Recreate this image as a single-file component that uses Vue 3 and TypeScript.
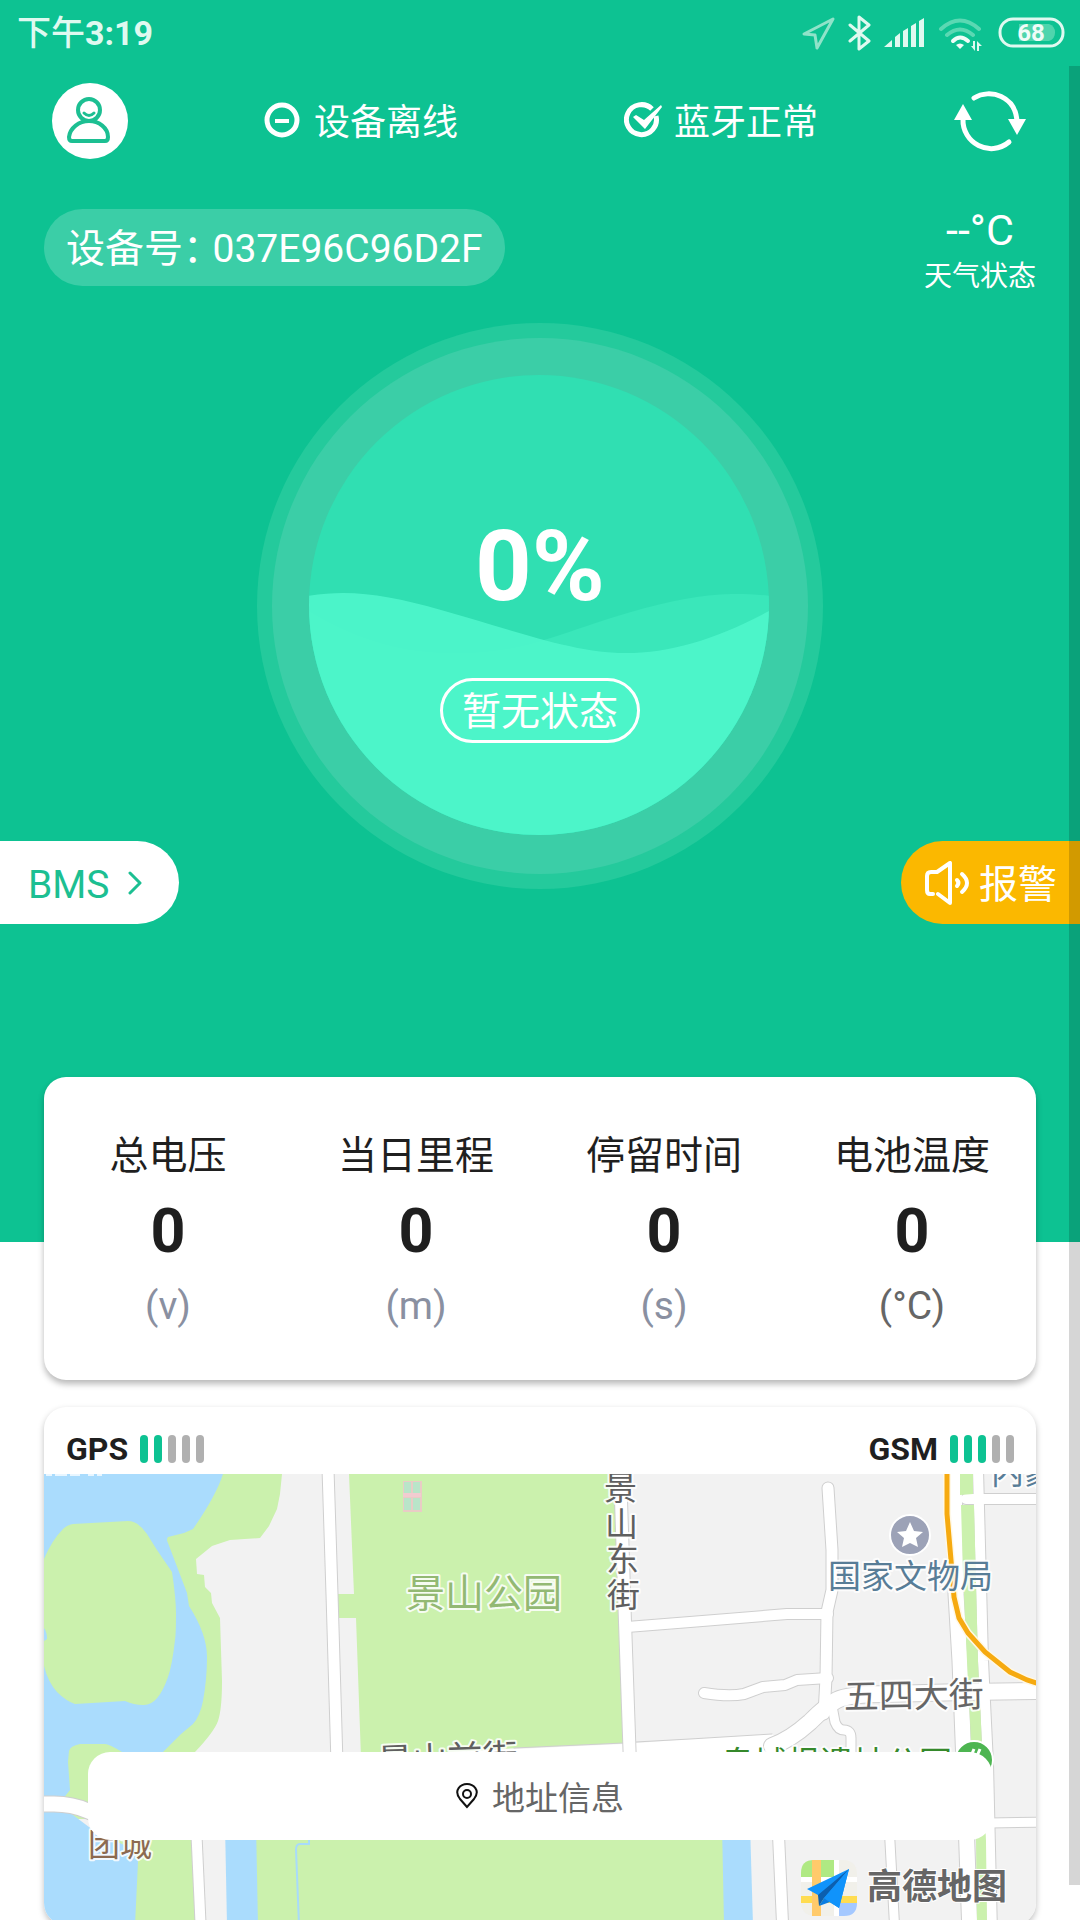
<script setup lang="ts">
interface Stat {
  label: string
  value: number
  unit: string
  dark?: boolean
}

const stats: Stat[] = [
  { label: '总电压', value: 0, unit: '(v)' },
  { label: '当日里程', value: 0, unit: '(m)' },
  { label: '停留时间', value: 0, unit: '(s)' },
  { label: '电池温度', value: 0, unit: '(°C)', dark: true },
]

const signals = [
  { name: 'GPS', level: 2 },
  { name: 'GSM', level: 3 },
]

const deviceId = '037E96C96D2F'
const charge = 0

// Centre lines of the streets, with their drawn width
const roads = [
  { d: 'M284 -5L288 120L293 290', w: 11 },
  { d: 'M576 -5L581 148L586 290', w: 12 },
  { d: 'M583 153L646 148L743 140L784 140', w: 10 },
  { d: 'M784 14L788 76L788 116L783 138L782 204L780 240', w: 11 },
  { d: 'M660 219Q685 223 700 220L719 213L741 211L753 206L784 204', w: 10 },
  { d: 'M788 232L791 248Q794 256 800 256Q807 256 807 264L807 290', w: 9 },
  { d: 'M1000 217L920 218L843 220Q805 220 793 226Q783 231 766 248Q746 266 728 272', w: 16 },
  { d: 'M-5 330L10 330Q28 330 44 337L90 356', w: 15 },
  { d: 'M910 -5L912 120L916 187L920 290L926 460', w: 15 },
  { d: 'M934 -5L939 187L944 290L948 460', w: 10 },
  { d: 'M922 25L1000 25', w: 10 },
  { d: 'M945 349L1000 348', w: 9 },
  { d: 'M734 350L739 460', w: 11 },
  { d: 'M845 350L851 460', w: 9 },
  { d: 'M152 350L157 460', w: 10 },
]
</script>

<template>
  <div class="screen">
    <div class="status-bar">
      <span class="clock">下午<b>3:19</b></span>
      <svg class="sys-icons" viewBox="0 0 264 36" fill="none" aria-hidden="true">
        <path d="M2 19L31 4L15 33L13 20Z" stroke="#8fe3c9" stroke-width="3" stroke-linejoin="round" />
        <path d="M48 10L67 26L57 34V2L67 10L48 26" stroke="#dff9f0" stroke-width="3" stroke-linejoin="round" stroke-linecap="round" />
        <path d="M82 32L90 25V32ZM93 32V22L98 18V32ZM101 32V16L106 13V32ZM109 32V11L114 8V32ZM117 32V6L122 3V32Z" fill="#dff9f0" />
        <path d="M139 14Q158 -3 177 14M145 20Q158 9 171 20" stroke="#5bd8b3" stroke-width="4" stroke-linecap="round" />
        <path d="M151 26Q158 19 166 26" stroke="#effcf8" stroke-width="4" stroke-linecap="round" />
        <path d="M154 30Q158 27 162 30L158 34Z" fill="#effcf8" />
        <path d="M171 26H173V36L169 31H171ZM175 36V26L180 31H177V36Z" fill="#dff9f0" />
        <rect x="198" y="4" width="63" height="27" rx="13" stroke="#dff9f0" stroke-width="3" />
        <path d="M217 9H247A9 9 0 0 1 247 26H217Z" fill="#4fd5ad" />
        <text class="battery" x="229" y="26" text-anchor="middle">68</text>
      </svg>
    </div>

    <main class="content">
      <section class="hero">
        <header class="top">
          <button class="plain" type="button" aria-label="个人中心">
            <svg width="76" height="76" viewBox="0 0 76 76" fill="none">
              <circle cx="38" cy="38" r="38" fill="#fff" />
              <g stroke="#1cbf92" stroke-width="4" stroke-linejoin="round">
                <circle cx="37" cy="27" r="11" />
                <path d="M32 30Q37 35 42 30" stroke-width="3" stroke-linecap="round" />
                <path d="M20 58Q17 58 17 54C18 45 27 38 37 38S56 45 56 54Q56 58 53 58Z" />
              </g>
            </svg>
          </button>
          <div class="links">
            <div class="link-state">
              <svg width="38" height="38" viewBox="0 0 38 38" fill="none" stroke="#fff">
                <circle cx="18" cy="18" r="15" stroke-width="5" />
                <path d="M11 19H25" stroke-width="4" />
              </svg>
              <span>设备离线</span>
            </div>
            <div class="link-state">
              <svg width="38" height="38" viewBox="0 0 38 38" fill="none" stroke="#fff">
                <path d="M28 7A15 15 0 1 0 32 14" stroke-width="5" />
                <path d="M9 15L12 13L20 18L37 3L38 5L21 27Z" fill="#fff" stroke="none" />
              </svg>
              <span>蓝牙正常</span>
            </div>
          </div>
          <button class="plain" type="button" aria-label="刷新">
            <svg width="72" height="72" viewBox="0 0 72 72" fill="none" stroke="#fff" stroke-width="5" stroke-linecap="round">
              <path d="M20 13C36 3 62 11 63 37" />
              <path d="M9 34C8 58 36 73 55 57" />
              <path d="M0 35L9 19L18 35ZM54 34L63 50L72 34Z" fill="#fff" stroke="none" />
            </svg>
          </button>
        </header>

        <div class="device-row">
          <div class="device">
            <span class="device-label">设备号：</span>
            <span>{{ deviceId }}</span>
          </div>
          <div class="weather">
            <span class="temp">--°C</span>
            <span class="sky">天气状态</span>
          </div>
        </div>

        <div class="gauge">
          <svg class="gauge-art" viewBox="0 0 566 566" aria-hidden="true">
            <defs>
              <clipPath id="tank"><circle cx="282" cy="282" r="230" /></clipPath>
            </defs>
            <circle cx="283" cy="283" r="283" fill="#24ca9c" />
            <circle cx="283" cy="283" r="268" fill="#3bcea7" />
            <g clip-path="url(#tank)">
              <rect width="566" height="566" fill="#30dfb2" />
              <path d="M52 288C105 320 150 330 199 330C275 330 310 306 381 287C435 272 470 268 514 273V520H52Z" fill="#3ae7ba" />
              <path d="M50 273C95 266 130 272 184 287C250 305 315 330 368 330C415 330 460 316 514 287V520H50Z" fill="#4df5ca" fill-opacity=".93" />
            </g>
          </svg>
          <strong class="charge">{{ charge }}%</strong>
          <span class="charge-state">暂无状态</span>
        </div>

        <div class="side-row">
          <button class="side bms" type="button">
            <span>BMS</span>
            <svg width="16" height="24" viewBox="0 0 16 24" fill="none" stroke="#1cbf92" stroke-width="3" stroke-linecap="round" stroke-linejoin="round">
              <path d="M3 2L13 12L3 22" />
            </svg>
          </button>
          <button class="side alarm" type="button">
            <svg width="46" height="44" viewBox="0 0 46 44" fill="none" stroke="#fff" stroke-width="4" stroke-linecap="round" stroke-linejoin="round">
              <path d="M8 33H5Q2 33 2 29V15Q2 11 6 11H12L25 2V42L13 33" />
              <path d="M32 19Q35 22 32 25" />
              <path d="M37 13Q47 22 37 31" />
            </svg>
            <span>报警</span>
          </button>
        </div>
      </section>

      <dl class="card stats">
        <div v-for="s in stats" :key="s.label" class="stat">
          <dt>{{ s.label }}</dt>
          <dd class="value">{{ s.value }}</dd>
          <dd class="unit" :class="{ dark: s.dark }">{{ s.unit }}</dd>
        </div>
      </dl>

      <section class="card location">
        <div class="signals">
          <div v-for="g in signals" :key="g.name" class="signal">
            <span>{{ g.name }}</span>
            <span class="bars">
              <i v-for="n in 5" :key="n" :class="{ on: n <= g.level }"></i>
            </span>
          </div>
        </div>

        <div class="map-wrap">
          <svg class="map" viewBox="0 0 992 451" role="img" aria-label="地图">
            <rect width="992" height="451" fill="#f2f2f2" />
            <!-- lakeside park, lake and island -->
            <path fill="#cbf1ad" d="M0 0H238L236 20L233 35L225 52L216 64L186 66L168 72L152 85L153 100L160 101L161 113L167 119L168 129L176 144L178 207Q178 235 174 247Q170 258 151 278L120 345H0Z" />
            <path fill="#aadcfd" d="M0 0H179Q172 22 149 55L140 59L124 63Q122 65 124 69L143 119L145 132Q163 160 163 183Q163 205 159 227Q156 242 149 250L137 260L119 278Q98 290 78 278Q65 270 61 270L36 270Q26 272 25 277L24 288L26 316L18 326H0Z" />
            <path fill="#cbf1ad" d="M0 85Q8 66 19 55Q23 51 29 50L84 47Q94 47 103 60L113 76L128 98Q132 125 132 139Q132 160 131 166Q128 192 124 203Q114 232 99 231Q90 231 81 227L31 230Q22 227 13 218Q4 208 0 192V167L3 165Q3 158 0 154Z" />
            <path stroke="#e8f6ff" stroke-width="2" stroke-dasharray="6 3 12 3 10 8" d="M2 1H58" />
            <!-- lower left shore -->
            <path fill="#cbf1ad" d="M50 350H152V451H50Z" />
            <path fill="#aadcfd" d="M0 338H25L53 359L78 370Q94 378 94 388L91 451H0Z" />
            <!-- hill park -->
            <path fill="#cbf1ad" d="M305 0H570L580 269L473 274L317 284L312 144H293V120H310Z" />
            <path fill="#e9ccc5" d="M359 7H378V38H359Z" />
            <path fill="#b9e5c9" d="M360 8H367V19H360ZM369 8H376V19H369ZM360 24H367V36H360ZM369 24H376V36H369Z" />
            <path fill="#f2ccd0" d="M359 19H377V23H359Z" />
            <!-- palace moat -->
            <path fill="#aadcfd" d="M181 350H709V451H183Z" />
            <path fill="#cbf1ad" d="M212 350H678L680 451H214Z" />
            <path fill="#f2f2f2" d="M706 350H731V451H709Z" />
            <path fill="none" stroke="#a8dbfa" stroke-width="2" d="M265 362V370H256Q252 370 252 376L255 451" />
            <path fill="#fff" d="M300 283L473 275L580 270L646 265L728 260L750 275V300H300Z" />
            <g fill="none" stroke-linejoin="round" stroke-linecap="round">
              <path v-for="r in roads" :key="'c' + r.d" :d="r.d" stroke="#cfcfcf" :stroke-width="r.w + 2" />
              <path d="M470 274L580 269M592 268L646 265L728 260" stroke="#cfcfcf" stroke-width="1" />
              <path v-for="r in roads" :key="'f' + r.d" :d="r.d" stroke="#fff" :stroke-width="r.w" />
            </g>
            <!-- green strip between the carriageways, then the metro line -->
            <path fill="#cbf1ad" d="M916 0H929L929 20L916 21ZM917 31H930L934 187L935 208L924 209L919 100ZM925 227H936L942 367L943 451H933L932 367Z" />
            <path fill="none" stroke="#fff8e6" stroke-width="8" d="M903 0V40L907 86L910 123L915 144L924 159L941 178L966 198L983 206L992 209" />
            <path fill="none" stroke="#f6aa10" stroke-width="5" d="M903 0V40L907 86L910 123L915 144L924 159L941 178L966 198L983 206L996 210" />

            <circle cx="866" cy="61" r="20" fill="#9ca2b7" stroke="#fff" stroke-width="2" />
            <path fill="#fff" d="M866 48L870 57L879 58L872 64L874 73L866 69L858 73L860 64L853 58L862 57Z" />
            <circle cx="930" cy="286" r="19" fill="#4db551" stroke="#fff" stroke-width="2" />
            <path d="M927 282L930 275M933 282L936 275" stroke="#fff" stroke-width="3" />

            <g class="labels">
              <text x="362" y="133" font-size="39" fill="#93b973">景山公园</text>
              <g font-size="33" fill="#5f5f5f">
                <text x="560" y="26">景</text>
                <text x="561" y="62">山</text>
                <text x="562" y="97">东</text>
                <text x="563" y="133">街</text>
              </g>
              <text x="334" y="300" font-size="35" fill="#5f5f5f" transform="rotate(-2 334 300)">景山前街</text>
              <text x="784" y="114" font-size="33" fill="#587d97">国家文物局</text>
              <text x="947" y="10" font-size="33" fill="#587d97">内蒙古</text>
              <text x="800" y="235" font-size="35" fill="#666" transform="rotate(-1 800 235)">五四大街</text>
              <text x="677" y="301" font-size="33" fill="#35892b">皇城根遗址公园</text>
              <text x="44" y="382" font-size="32" fill="#8c6a50">团城</text>
            </g>

            <g transform="translate(757 386)">
              <rect width="56" height="56" rx="13" fill="#f1f0ea" />
              <path fill="#afe983" d="M13 0H33V17H0V13Q0 0 13 0Z" />
              <path fill="#fff" d="M33 0H38V56H33ZM0 17H56V22H0Z" />
              <path fill="#ffdc50" d="M0 36H56V43H0Z" />
              <path fill="#ffca6b" d="M11 0H20V56H11Z" />
              <path fill="#a4c8ff" d="M38 43H56Q56 56 43 56H38Z" />
              <path fill="#1093fb" d="M48 9L6 29L17 35L38 48Z" />
              <path fill="#0c5fae" d="M48 9L17 35L18 46L23 38Z" />
              <path fill="#0a7de0" d="M18 46L23 38L29 42Z" />
              <path fill="#1093fb" d="M48 9L23 38L38 48Z" />
            </g>
            <text class="brand" x="823" y="425">高德地图</text>
          </svg>
          <button class="address" type="button">
            <svg width="22" height="26" viewBox="0 0 22 26" fill="none" stroke="#111" stroke-width="2">
              <path d="M11 24L4 16C-3 7 5 1 11 1S25 7 18 16Z" />
              <circle cx="11" cy="11" r="4" />
            </svg>
            <span>地址信息</span>
          </button>
        </div>
      </section>
    </main>
    <div class="scroll-thumb"></div>
  </div>
</template>

<style>
body {
  margin: 0;
}
</style>

<style scoped>
.screen {
  position: relative;
  display: flex;
  flex-direction: column;
  height: 100vh;
  overflow: hidden;
  background: #fff;
  color: #1f1f1f;
  font-family: Roboto, "Noto Sans CJK SC", sans-serif;
}
button {
  border: 0;
  padding: 0;
  font: inherit;
  cursor: pointer;
}
svg {
  display: block;
  flex: none;
}
.status-bar {
  display: flex;
  flex: none;
  align-items: center;
  justify-content: space-between;
  height: 66px;
  padding: 0 14px 0 17px;
  background: #0dc292;
}
.clock {
  color: #dff9f0;
  font-size: 34px;
  font-weight: 500;
  line-height: 40px;
}
.clock b {
  font-weight: 700;
}
.sys-icons {
  width: 264px;
  height: 36px;
}
.battery {
  fill: #effcf8;
  font-size: 24px;
  font-weight: 700;
}
.content {
  flex: 1;
  min-height: 0;
  overflow-y: auto;
  scrollbar-width: none;
}
.hero {
  padding: 17px 0 318px;
  background: #0dc292;
  color: #fff;
}
.top {
  display: flex;
  align-items: center;
  padding: 0 54px 0 52px;
}
.plain {
  background: none;
}
.links {
  display: flex;
  flex: 1;
  justify-content: center;
  gap: 166px;
}
.link-state {
  display: flex;
  align-items: center;
  gap: 12px;
  font-size: 36px;
  line-height: 42px;
}
.link-state span {
  padding-top: 4px;
}
.device-row {
  display: flex;
  align-items: center;
  justify-content: space-between;
  margin-top: 36px;
  padding: 0 44px;
}
.device {
  display: flex;
  gap: 10px;
  padding: 4px 22px 0;
  border-radius: 39px;
  background: #3bcea7;
  font-size: 39px;
  line-height: 73px;
}
.device-label {
  font-feature-settings: "halt";
}
.weather {
  display: flex;
  flex-direction: column;
  align-items: center;
  padding-top: 10px;
}
.temp {
  font-size: 43px;
  line-height: 50px;
}
.sky {
  font-size: 28px;
  line-height: 44px;
}
.gauge {
  position: relative;
  display: flex;
  flex-direction: column;
  align-items: center;
  box-sizing: border-box;
  width: 566px;
  height: 566px;
  margin: 24px auto 0;
  padding-top: 193px;
}
.gauge-art {
  position: absolute;
  inset: 0;
}
.charge {
  position: relative;
  font-size: 99px;
  line-height: 100px;
}
.charge-state {
  position: relative;
  margin-top: 62px;
  padding: 4px 19px 0;
  border: 3px solid #fff;
  border-radius: 33px;
  font-size: 39px;
  line-height: 55px;
}
.side-row {
  position: relative;
  display: flex;
  justify-content: space-between;
  margin-top: -48px;
}
.side {
  display: flex;
  align-items: center;
  height: 83px;
  font-size: 39px;
  line-height: 44px;
}
.side span {
  padding-top: 4px;
}
.bms {
  gap: 17px;
  padding: 0 36px 0 28px;
  border-radius: 0 42px 42px 0;
  background: #fff;
  color: #1cbf92;
}
.alarm {
  gap: 8px;
  padding: 0 23px 0 24px;
  border-radius: 42px 0 0 42px;
  background: #fbb800;
  color: #fff;
}
.card {
  position: relative;
  margin: 0 44px;
  border-radius: 22px;
  background: #fff;
}
.stats {
  display: grid;
  grid-template-columns: repeat(4, 1fr);
  margin-top: -165px;
  padding: 52px 0 49px;
  box-shadow: 0 4px 6px rgba(0, 0, 0, 0.28);
  text-align: center;
}
.stat dt {
  font-size: 39px;
  line-height: 54px;
}
.stat dd {
  margin: 0;
}
.stat .value {
  margin-top: 13px;
  font-size: 61px;
  font-weight: 700;
  line-height: 70px;
}
.stat .unit {
  margin-top: 15px;
  color: #8a90a1;
  font-size: 39px;
  line-height: 50px;
}
.stat .unit.dark {
  color: #666;
}
.location {
  margin-top: 27px;
  margin-bottom: 20px;
  overflow: hidden;
  box-shadow: 0 3px 6px rgba(0, 0, 0, 0.25);
}
.signals {
  display: flex;
  align-items: flex-end;
  justify-content: space-between;
  height: 56px;
  padding: 0 22px 11px;
}
.signal {
  display: flex;
  align-items: center;
  gap: 12px;
  font-size: 32px;
  font-weight: 700;
  line-height: 28px;
}
.bars {
  display: flex;
  gap: 6px;
}
.bars i {
  width: 8px;
  height: 28px;
  border-radius: 4px;
  background: #b0b0b0;
}
.bars i.on {
  background: #0dc292;
}
.map-wrap {
  position: relative;
}
.map {
  width: 100%;
}
.labels text {
  paint-order: stroke;
  stroke: rgba(255, 255, 255, 0.85);
  stroke-width: 4px;
  stroke-linejoin: round;
}
.brand {
  fill: #666;
  font-size: 35px;
  font-weight: 700;
  paint-order: stroke;
  stroke: #fff;
  stroke-width: 2px;
}
.address {
  position: absolute;
  right: 44px;
  bottom: 85px;
  left: 44px;
  display: flex;
  align-items: center;
  justify-content: center;
  gap: 14px;
  height: 88px;
  border-radius: 22px;
  background: #fff;
  color: #666;
  font-size: 33px;
}
.scroll-thumb {
  position: absolute;
  top: 66px;
  right: 0;
  bottom: 35px;
  width: 11px;
  background: rgba(0, 0, 0, 0.16);
}
</style>
